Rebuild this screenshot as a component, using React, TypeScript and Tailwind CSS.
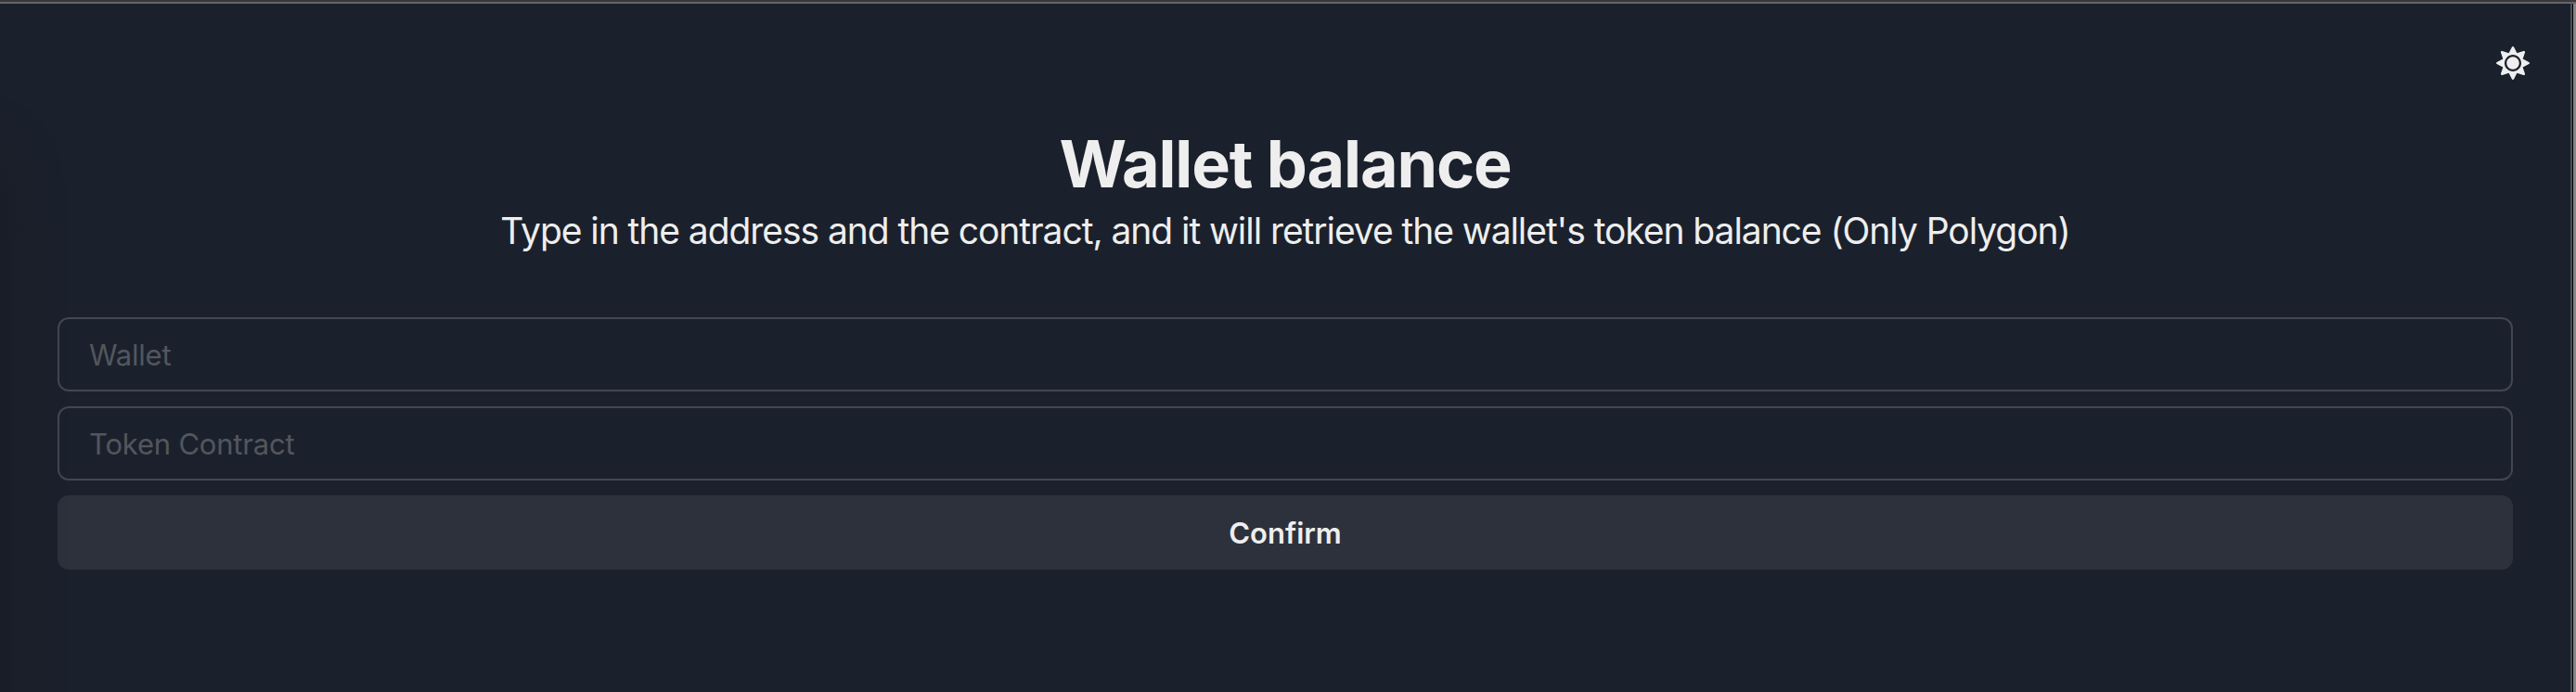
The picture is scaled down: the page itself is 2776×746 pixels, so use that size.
import { FaSun } from "react-icons/fa";

function Field({ placeholder }: { placeholder: string }) {
  return (
    <input
      type="text"
      aria-label={placeholder}
      placeholder={placeholder}
      className="h-20 w-full rounded-xl border-2 border-[#43464f] bg-transparent px-8 text-[31px] tracking-[-0.2px] text-[#ececec] outline-none placeholder:text-[#53565d]"
    />
  );
}

export default function App() {
  return (
    <div className="flex h-[746px] w-full flex-col overflow-hidden bg-[#1b212c] font-['Inter',sans-serif] text-[#eeeeee]">
      <div className="h-0.5 shrink-0 bg-[#39393b]" />
      <div className="h-0.5 shrink-0 bg-[#656567]" />
      <div className="flex min-h-0 flex-1">
        <main className="relative flex min-w-0 flex-1 flex-col overflow-hidden px-[62px]">
          <div className="pointer-events-none absolute top-[166px] -left-[104px] h-[900px] w-[100px] rounded-[40px] shadow-[0_0_64px_0_rgba(24,24,34,0.9)]" />
          <header className="flex justify-end pt-[46px]">
            <button aria-label="Toggle color mode" className="-mr-[18px]">
              <FaSun className="size-9" />
            </button>
          </header>
          <h1 className="mt-[46px] text-center text-[70px] leading-[90px] font-bold tracking-[-1.1px] whitespace-nowrap">
            Wallet balance
          </h1>
          <p className="-mt-[3px] text-center text-[39px] leading-[60px] tracking-[-1.06px] whitespace-nowrap">
            Type in the address and the contract, and it will retrieve the wallet's token balance (Only Polygon)
          </p>
          <form className="mt-[63px] flex flex-col gap-4">
            <Field placeholder="Wallet" />
            <Field placeholder="Token Contract" />
            <button type="button" className="h-20 rounded-xl bg-[#2d313c] pt-0.5 text-[31px] font-semibold">
              Confirm
            </button>
          </form>
        </main>
        <div className="w-0.5 bg-[#4b4e58]" />
        <div className="w-px bg-black" />
        <div className="w-[3px] bg-[#858585]" />
      </div>
    </div>
  );
}
